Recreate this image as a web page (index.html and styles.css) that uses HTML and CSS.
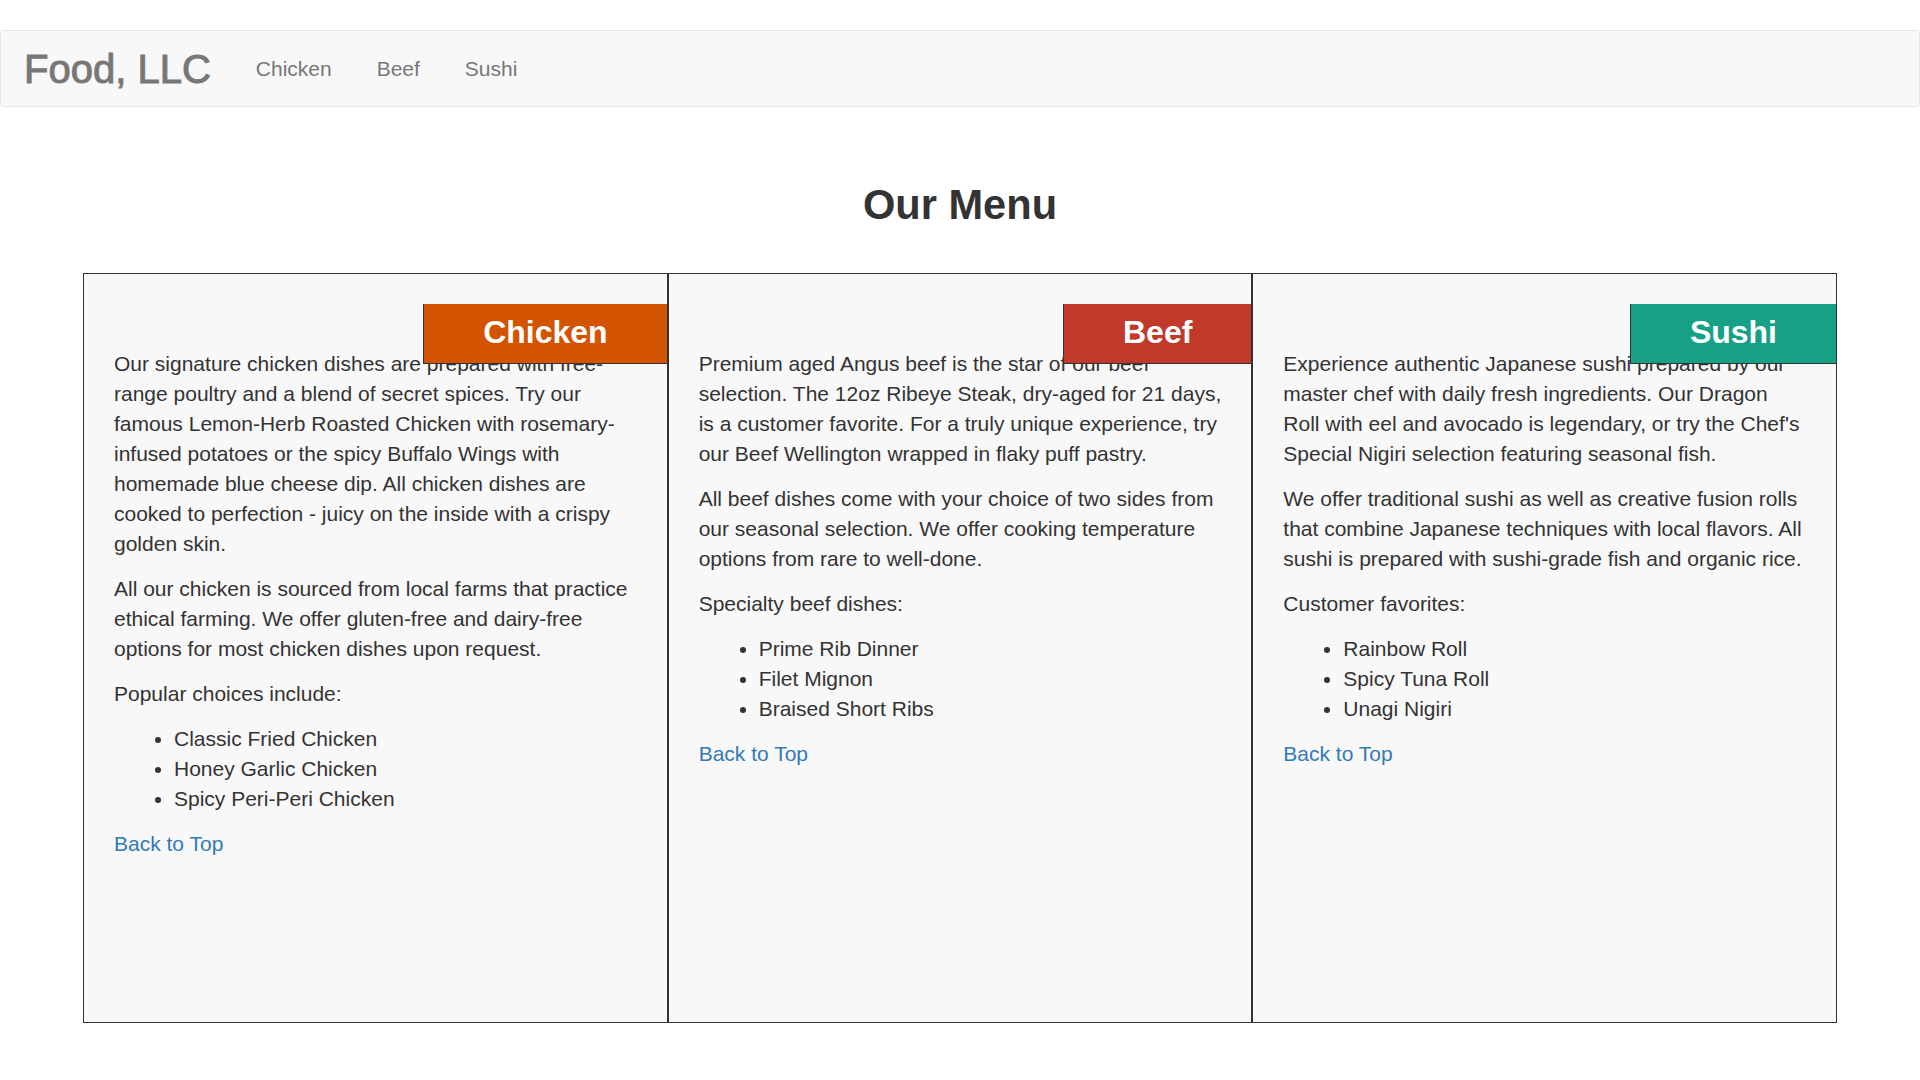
FILE: index.html
```html
<!DOCTYPE html>
<html lang="en">
<head>
<meta charset="utf-8">
<title>Food, LLC - Our Menu</title>
<link rel="stylesheet" href="styles.css">
</head>
<body>
<nav class="navbar">
  <a class="brand" href="#">Food, LLC</a>
  <ul class="nav-links">
    <li><a href="#chicken">Chicken</a></li>
    <li><a href="#beef">Beef</a></li>
    <li><a href="#sushi">Sushi</a></li>
  </ul>
</nav>
<main class="menu">
  <h1 class="menu-title">Our Menu</h1>
  <div class="menu-grid">
    <section class="menu-card" id="chicken">
      <h2 class="menu-label label-chicken">Chicken</h2>
      <p>Our signature chicken dishes are prepared with free-range poultry and a blend of secret spices. Try our famous Lemon-Herb Roasted Chicken with rosemary-infused potatoes or the spicy Buffalo Wings with homemade blue cheese dip. All chicken dishes are cooked to perfection - juicy on the inside with a crispy golden skin.</p>
      <p>All our chicken is sourced from local farms that practice ethical farming. We offer gluten-free and dairy-free options for most chicken dishes upon request.</p>
      <p>Popular choices include:</p>
      <ul>
        <li>Classic Fried Chicken</li>
        <li>Honey Garlic Chicken</li>
        <li>Spicy Peri-Peri Chicken</li>
      </ul>
      <p><a class="back-top" href="#">Back to Top</a></p>
    </section>
    <section class="menu-card" id="beef">
      <h2 class="menu-label label-beef">Beef</h2>
      <p>Premium aged Angus beef is the star of our beef selection. The 12oz Ribeye Steak, dry-aged for 21 days, is a customer favorite. For a truly unique experience, try our Beef Wellington wrapped in flaky puff pastry.</p>
      <p>All beef dishes come with your choice of two sides from our seasonal selection. We offer cooking temperature options from rare to well-done.</p>
      <p>Specialty beef dishes:</p>
      <ul>
        <li>Prime Rib Dinner</li>
        <li>Filet Mignon</li>
        <li>Braised Short Ribs</li>
      </ul>
      <p><a class="back-top" href="#">Back to Top</a></p>
    </section>
    <section class="menu-card" id="sushi">
      <h2 class="menu-label label-sushi">Sushi</h2>
      <p>Experience authentic Japanese sushi prepared by our master chef with daily fresh ingredients. Our Dragon Roll with eel and avocado is legendary, or try the Chef's Special Nigiri selection featuring seasonal fish.</p>
      <p>We offer traditional sushi as well as creative fusion rolls that combine Japanese techniques with local flavors. All sushi is prepared with sushi-grade fish and organic rice.</p>
      <p>Customer favorites:</p>
      <ul>
        <li>Rainbow Roll</li>
        <li>Spicy Tuna Roll</li>
        <li>Unagi Nigiri</li>
      </ul>
      <p><a class="back-top" href="#">Back to Top</a></p>
    </section>
  </div>
</main>
</body>
</html>
```
FILE: styles.css
```css
* {
  box-sizing: border-box;
}

body {
  margin: 0;
  background: #fff;
  color: #333;
  font-family: "Liberation Sans", Arial, Helvetica, sans-serif;
  font-size: 21px;
  line-height: 1.42857;
}

.navbar {
  margin-top: 30px;
  height: 77px;
  display: flex;
  align-items: center;
  background: #f8f8f8;
  border: 1px solid #e7e7e7;
  border-radius: 4px;
}

.brand {
  padding: 3px 22.5px 0 23px;
  font-size: 40px;
  color: #777;
  text-decoration: none;
  -webkit-text-stroke: 1px #777;
}

.nav-links {
  display: flex;
  margin: 0;
  padding: 0;
  list-style: none;
}

.nav-links a {
  display: block;
  padding: 0 22.5px;
  color: #777;
  text-decoration: none;
}

.menu {
  padding: 0 83px;
}

.menu-title {
  margin: 75px 0 45px;
  text-align: center;
  font-size: 41.6px;
  line-height: 1.1;
  font-weight: bold;
  color: #333;
}

.menu-grid {
  display: grid;
  grid-template-columns: repeat(3, 1fr);
}

.menu-card {
  position: relative;
  height: 750px;
  padding: 75px 29px 0 30px;
  background: #f8f8f8;
  border: 1px solid #333;
}

.menu-label {
  position: absolute;
  top: 30px;
  right: 0;
  margin: 0;
  padding: 5px 59px 8px;
  font-size: 32px;
  line-height: 46px;
  font-weight: bold;
  color: #fff;
  border-left: 1px solid #333;
  border-bottom: 1px solid #333;
}

.label-chicken {
  background: #d35400;
}

.label-beef {
  background: #c0392b;
}

.label-sushi {
  background: #16a085;
}

.menu-card p {
  margin: 0 0 15px;
}

.menu-card ul {
  margin: 0 0 15px;
  padding-left: 60px;
}

.back-top {
  color: #337ab7;
  text-decoration: none;
}
```
